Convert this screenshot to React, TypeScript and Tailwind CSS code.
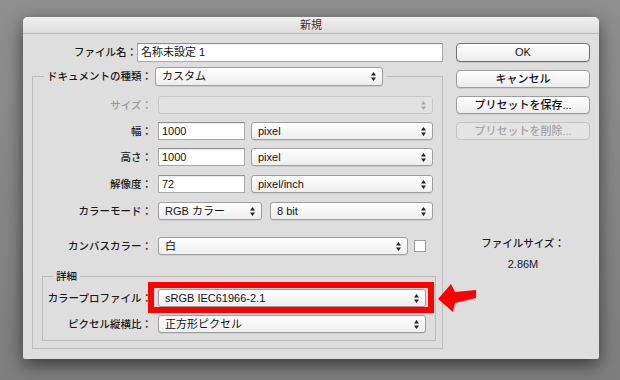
import React from "react";

function Arrows({ disabled }: { disabled?: boolean }) {
  return (
    <svg width="5" height="9" viewBox="0 0 5 9" className={disabled ? "fill-[#a9a9a9]" : "fill-[#222]"}>
      <path d="M2.5 0 L5 3.5 H0 Z M2.5 9 L5 5.5 H0 Z" />
    </svg>
  );
}

function Select({ className = "", children, disabled }: { className?: string; children?: React.ReactNode; disabled?: boolean }) {
  return (
    <div
      className={
        "flex items-center justify-between rounded-[3px] border pl-[6px] pr-[6px] text-[11px] leading-none " +
        (disabled
          ? "border-[#c6c6c6] bg-[#e2e2e2] text-[#999] "
          : "border-[#9e9e9e] bg-gradient-to-b from-white to-[#eeeeee] text-[#111] shadow-[0_1px_0_rgba(0,0,0,0.07)] ") +
        className
      }
    >
      <span className="whitespace-nowrap">{children}</span>
      <Arrows disabled={disabled} />
    </div>
  );
}

function Input({ className = "", children }: { className?: string; children?: React.ReactNode }) {
  return (
    <div
      className={
        "flex items-center border border-[#a9a9a9] border-t-[#8f8f8f] bg-white pl-[3px] text-[11px] leading-none text-[#111] shadow-[inset_0_1px_1px_rgba(0,0,0,0.08)] " +
        className
      }
    >
      {children}
    </div>
  );
}

function Button({ children, className = "", disabled, primary }: { children: React.ReactNode; className?: string; disabled?: boolean; primary?: boolean }) {
  return (
    <div
      className={
        "flex w-[134px] items-center justify-center rounded-[4px] border text-[11px] font-medium leading-none " +
        (disabled
          ? "border-[#c4c4c4] bg-[#e4e4e4] text-[#a3a3a3] "
          : primary
          ? "border-[#6f6f6f] bg-gradient-to-b from-white to-[#ececec] text-[#111] shadow-[0_1px_0_rgba(0,0,0,0.1)] "
          : "border-[#9c9c9c] bg-gradient-to-b from-white to-[#ececec] text-[#111] shadow-[0_1px_0_rgba(0,0,0,0.08)] ") +
        className
      }
    >
      {children}
    </div>
  );
}

function Label({ className = "", children, disabled }: { className?: string; children: React.ReactNode; disabled?: boolean }) {
  return (
    <div
      className={
        "shrink-0 whitespace-nowrap text-right text-[10.5px] font-medium leading-none " +
        (disabled ? "text-[#9a9a9a] " : "text-[#1a1a1a] ") +
        className
      }
    >
      {children}
    </div>
  );
}

export default function App() {
  return (
    <div className="h-[380px] w-[620px] overflow-hidden bg-gradient-to-b from-[#8f8f8f] to-[#7e7e7e] pl-[23px] pt-[17px] font-['Liberation_Sans','Noto_Sans_CJK_JP',sans-serif]">
      <div className="relative flex h-[342px] w-[576px] flex-col rounded-t-[5px] rounded-b-[2px] bg-[#dedede] shadow-[0_6px_18px_rgba(0,0,0,0.55)]">
        {/* title bar */}
        <div className="flex h-[17px] items-center justify-center rounded-t-[5px] border-b border-[#b8b8b8] bg-gradient-to-b from-[#efefef] to-[#dddddd] text-[11px] leading-none text-[#333]">
          新規
        </div>

        <div className="flex pl-[9px] pt-[9px]">
          {/* left column */}
          <div className="flex w-[411px] flex-col">
            <div className="flex h-[19px] items-center">
              <Label className="w-[105px]">ファイル名：</Label>
              <Input className="h-[19px] w-[306px]">名称未設定 1</Input>
            </div>

            {/* main group */}
            <div className="mt-[14px] flex h-[273px] w-[411px] flex-col border border-[#bcbcbc]">
              <div className="-mt-[10px] ml-[11px] flex h-[19px] w-fit items-center bg-[#dedede] pl-[3px] pr-[4px]">
                <Label className="w-[105px]">ドキュメントの種類：</Label>
                <Select className="ml-[3px] h-[19px] w-[228px]">カスタム</Select>
              </div>

              <div className="mt-[10px] flex h-[18px] items-center">
                <Label className="w-[119px]" disabled>サイズ：</Label>
                <Select className="ml-[6px] h-[18px] w-[275px]" disabled></Select>
              </div>

              <div className="mt-[8px] flex h-[18px] items-center">
                <Label className="w-[119px]">幅：</Label>
                <Input className="ml-[6px] h-[18px] w-[87px]">1000</Input>
                <Select className="ml-[6px] h-[18px] w-[182px]">pixel</Select>
              </div>

              <div className="mt-[8px] flex h-[18px] items-center">
                <Label className="w-[119px]">高さ：</Label>
                <Input className="ml-[6px] h-[18px] w-[87px]">1000</Input>
                <Select className="ml-[6px] h-[18px] w-[182px]">pixel</Select>
              </div>

              <div className="mt-[9px] flex h-[18px] items-center">
                <Label className="w-[119px]">解像度：</Label>
                <Input className="ml-[6px] h-[18px] w-[87px]">72</Input>
                <Select className="ml-[6px] h-[18px] w-[182px]">pixel/inch</Select>
              </div>

              <div className="mt-[9px] flex h-[18px] items-center">
                <Label className="w-[119px]">カラーモード：</Label>
                <Select className="ml-[6px] h-[18px] w-[104px]">RGB カラー</Select>
                <Select className="ml-[8px] h-[18px] w-[163px]">8 bit</Select>
              </div>

              <div className="mt-[17px] flex h-[18px] items-center">
                <Label className="w-[119px]">カンバスカラー：</Label>
                <Select className="ml-[6px] h-[18px] w-[250px]">白</Select>
                <div className="ml-[6px] h-[12px] w-[12px] border border-[#9a9a9a] bg-white" />
              </div>

              {/* detail group */}
              <div className="ml-[9px] mt-[21px] flex h-[65px] w-[394px] flex-col border border-[#bcbcbc]">
                <div className="-mt-[7px] ml-[10px] w-fit bg-[#dedede] px-[3px] text-[10.5px] font-medium leading-[13px] text-[#1a1a1a]">
                  詳細
                </div>
                <div className="mt-[6px] flex h-[18px] items-center">
                  <Label className="w-[109px]">カラープロファイル：</Label>
                  <div className="relative ml-[6px]">
                    <Select className="h-[18px] w-[268px]">sRGB IEC61966-2.1</Select>
                    <div className="pointer-events-none absolute -bottom-[6px] -left-[10px] -right-[8px] -top-[7px] border-[6px] border-[#ff0000]" />
                  </div>
                </div>
                <div className="mt-[8px] flex h-[18px] items-center">
                  <Label className="w-[109px]">ピクセル縦横比：</Label>
                  <Select className="ml-[6px] h-[18px] w-[268px]">正方形ピクセル</Select>
                </div>
              </div>
            </div>
          </div>

          {/* right column */}
          <div className="ml-[13px] flex w-[134px] flex-col">
            <Button primary className="h-[19px]">OK</Button>
            <Button className="mt-[8px] h-[18px]">キャンセル</Button>
            <Button className="mt-[8px] h-[18px]">プリセットを保存...</Button>
            <Button disabled className="mt-[8px] h-[18px]">プリセットを削除...</Button>
            <div className="mt-[97px] text-center text-[10.5px] font-medium leading-[13px] text-[#1a1a1a]">ファイルサイズ：</div>
            <div className="mt-[8px] text-center text-[11px] leading-[13px] text-[#1a1a1a]">2.86M</div>
          </div>
        </div>

        {/* annotation arrow */}
        <svg className="absolute left-[414px] top-[266px]" width="41" height="30" viewBox="0 0 41 30">
          <polygon points="1,16 14,1 18,9 39,7 39,15 18,20 16,29" fill="#ff0000" />
        </svg>
      </div>
    </div>
  );
}
